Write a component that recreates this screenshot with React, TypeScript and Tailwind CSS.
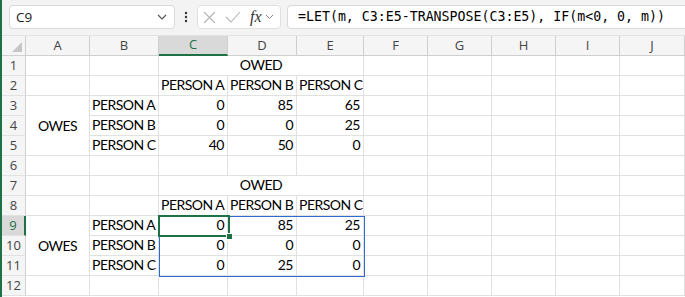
import React from "react";

const cols = ["A", "B", "C", "D", "E", "F", "G", "H", "I", "J"];

type Cell = { text?: string; align?: "l" | "r" | "c"; span?: number; rows?: number; vcenter?: boolean };

const empty = (n: number): Cell[] => Array.from({ length: n }, () => ({}));

const rowsData: Cell[][] = [
  [{}, {}, { text: "OWED", align: "c", span: 3 }, ...empty(5)],
  [{}, {}, { text: "PERSON A" }, { text: "PERSON B" }, { text: "PERSON C" }, ...empty(5)],
  [{ text: "OWES", align: "c", rows: 3, vcenter: true }, { text: "PERSON A" }, { text: "0", align: "r" }, { text: "85", align: "r" }, { text: "65", align: "r" }, ...empty(5)],
  [{ text: "PERSON B" }, { text: "0", align: "r" }, { text: "0", align: "r" }, { text: "25", align: "r" }, ...empty(5)],
  [{ text: "PERSON C" }, { text: "40", align: "r" }, { text: "50", align: "r" }, { text: "0", align: "r" }, ...empty(5)],
  empty(10),
  [{}, {}, { text: "OWED", align: "c", span: 3 }, ...empty(5)],
  [{}, {}, { text: "PERSON A" }, { text: "PERSON B" }, { text: "PERSON C" }, ...empty(5)],
  [{ text: "OWES", align: "c", rows: 3, vcenter: true }, { text: "PERSON A" }, { text: "0", align: "r" }, { text: "85", align: "r" }, { text: "25", align: "r" }, ...empty(5)],
  [{ text: "PERSON B" }, { text: "0", align: "r" }, { text: "0", align: "r" }, { text: "0", align: "r" }, ...empty(5)],
  [{ text: "PERSON C" }, { text: "0", align: "r" }, { text: "25", align: "r" }, { text: "0", align: "r" }, ...empty(5)],
  empty(10),
];

function CellEl({ c }: { c: Cell }) {
  const span = c.span === 3 ? "col-span-3" : "";
  const rspan = c.rows === 3 ? "row-span-3" : "";
  const justify = c.align === "r" ? "justify-end pr-[3px]" : c.align === "c" ? "justify-center" : "justify-start pl-[2px]";
  const v = c.vcenter ? "items-center" : "items-end pb-[1px]";
  return (
    <div
      className={`${span} ${rspan} flex ${justify} ${v} border-r border-b border-[#e1e1e1] bg-white text-[14px] leading-[18px] tracking-[-0.5px] text-black font-['Lato',sans-serif] whitespace-nowrap overflow-hidden`}
    >
      {c.text}
    </div>
  );
}

export default function App() {
  return (
    <div className="w-[685px] h-[297px] overflow-hidden bg-white border-l-2 border-[#1e7145] relative">
      {/* Toolbar */}
      <div className="h-[35px] bg-[#f3f3f3] flex items-start pt-[5px] pl-[7px] overflow-hidden">
        <div className="w-[166px] h-[24px] shrink-0 rounded-[4px] border border-[#d9d9d9] bg-white flex items-center justify-between pl-[6px] pr-[6px]">
          <span className="text-[13.5px] text-[#1a1a1a] font-['Open_Sans',sans-serif]">C9</span>
          <svg width="10" height="6" viewBox="0 0 10 6" className="mr-[1px]">
            <path d="M1 1 L5 5 L9 1" fill="none" stroke="#555" strokeWidth="1.2" />
          </svg>
        </div>
        <div className="w-[22px] h-[24px] shrink-0 flex items-center justify-center">
          <svg width="4" height="12" viewBox="0 0 4 12">
            <circle cx="2" cy="2" r="1.2" fill="#333" />
            <circle cx="2" cy="6" r="1.2" fill="#333" />
            <circle cx="2" cy="10" r="1.2" fill="#333" />
          </svg>
        </div>
        <div className="w-[84px] h-[24px] shrink-0 rounded-[4px] border border-[#e0e0e0] bg-white flex items-center pl-[5px]">
          <svg width="13" height="13" viewBox="0 0 13 13">
            <path d="M1 1 L12 12 M12 1 L1 12" stroke="#b5b5b5" strokeWidth="1.1" fill="none" />
          </svg>
          <svg width="16" height="12" viewBox="0 0 16 12" className="ml-[9px]">
            <path d="M1 6 L6 11 L15 1" stroke="#b5b5b5" strokeWidth="1.1" fill="none" />
          </svg>
          <span className="ml-[9px] text-[16px] italic text-[#333] font-['Liberation_Serif',serif] leading-none">fx</span>
          <svg width="9" height="6" viewBox="0 0 9 6" className="ml-[3px]">
            <path d="M1 1 L4.5 4.5 L8 1" fill="none" stroke="#888" strokeWidth="1" />
          </svg>
        </div>
        <div className="ml-[6px] w-[420px] h-[24px] shrink-0 rounded-[4px] border border-[#d9d9d9] bg-white flex items-center pl-[10px]">
          <span className="text-[13.25px] text-black font-['DejaVu_Sans_Mono',monospace] whitespace-pre">
            =LET(m, C3:E5-TRANSPOSE(C3:E5), IF(m&lt;0, 0, m))
          </span>
        </div>
      </div>

      {/* Grid */}
      <div className="relative grid grid-cols-[24px_64px_69px_69px_69px_67px_64px_64px_64px_64px_1fr] auto-rows-[20px] border-t border-[#e3e3e3]">
        {/* header row */}
        <div className="relative bg-[#f5f5f5] border-r border-b border-[#cfcfcf]">
          <div className="absolute right-[3px] bottom-[3px] w-0 h-0 border-l-[10px] border-l-transparent border-b-[10px] border-b-[#c6c6c6]" />
        </div>
        {cols.map((c) => (
          <div
            key={c}
            className={`flex items-center justify-center text-[13px] font-['Open_Sans',sans-serif] border-r ${
              c === "C"
                ? "bg-[#d9d9d9] text-[#1e6e42] border-b-[2px] border-b-[#1e7145] border-r-[#cfcfcf]"
                : "bg-[#f5f5f5] text-[#444] border-b border-[#cfcfcf]"
            }`}
          >
            {c}
          </div>
        ))}

        {rowsData.map((row, i) => (
          <React.Fragment key={i}>
            <div
              className={`flex items-center justify-center text-[13px] font-['Open_Sans',sans-serif] border-b border-[#e1e1e1] ${
                i === 8
                  ? "bg-[#d9d9d9] text-[#1e6e42] border-r-[2px] border-r-[#1e7145]"
                  : "bg-[#f5f5f5] text-[#444] border-r border-r-[#cfcfcf]"
              }`}
            >
              {i + 1}
            </div>
            {row.map((c, j) => (
              <CellEl key={j} c={c} />
            ))}
          </React.Fragment>
        ))}

        {/* Spill range border C9:E11 */}
        <div className="absolute left-[157px] top-[180px] w-[206px] h-[61px] border border-[#2e6bd0] pointer-events-none" />
        {/* Active cell C9 */}
        <div className="absolute left-[156px] top-[179px] w-[72px] h-[22px] border-2 border-[#1e7145] pointer-events-none" />
        <div className="absolute left-[224px] top-[197px] w-[7px] h-[7px] bg-[#1e7145] border border-white pointer-events-none" />
      </div>
    </div>
  );
}
